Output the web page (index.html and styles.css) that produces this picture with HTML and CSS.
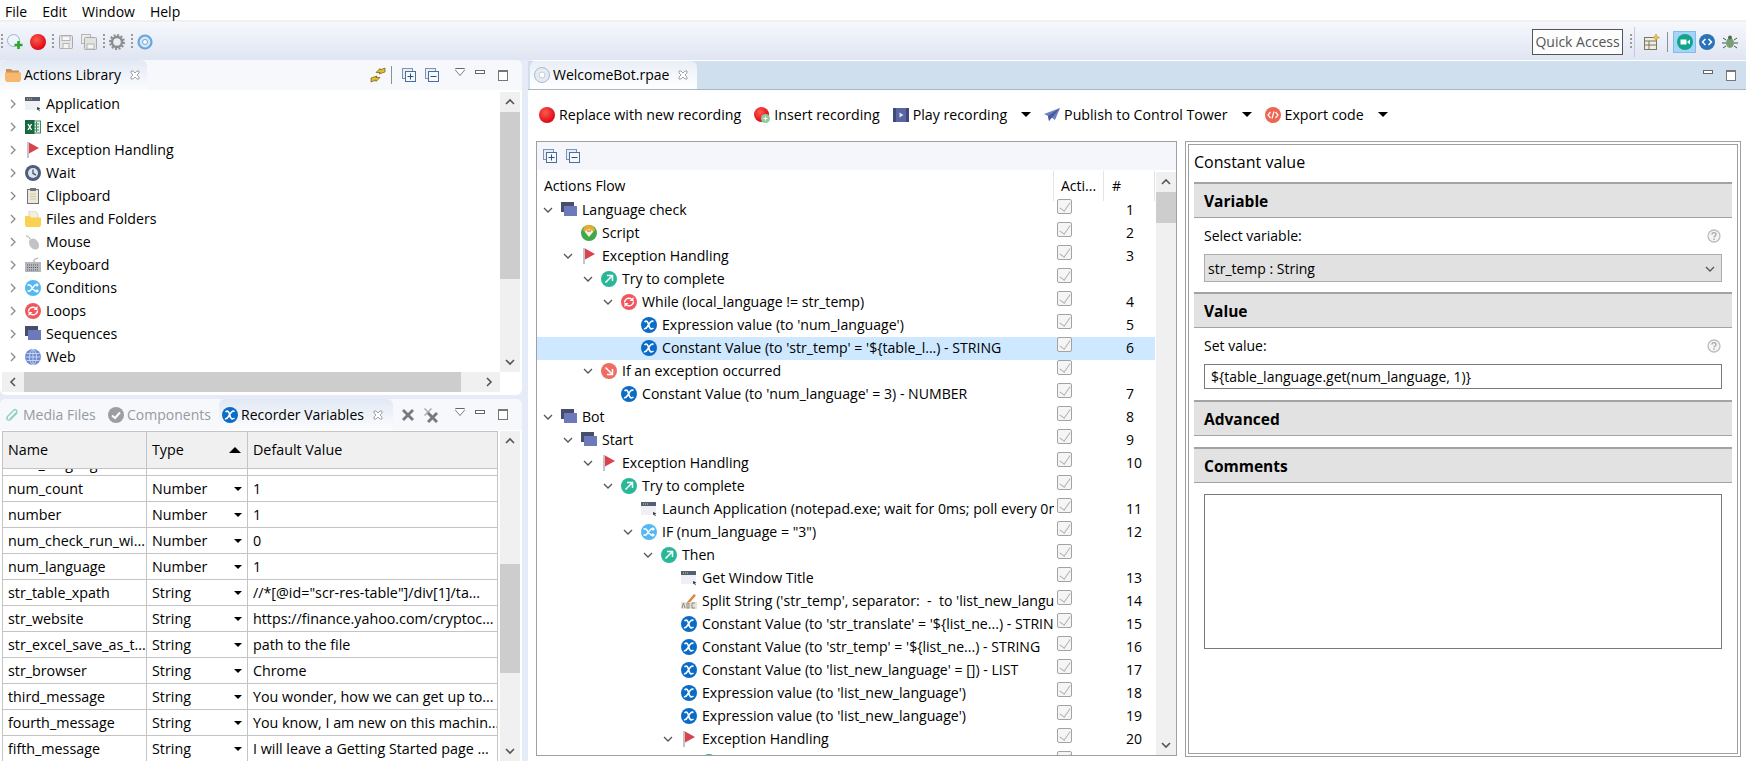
FILE: index.html
```html
<!DOCTYPE html>
<html>
<head>
<meta charset="UTF-8">
<title>WelcomeBot.rpae</title>
<link rel="stylesheet" href="styles.css">
</head>
<body>
<svg class="sprite">
	<defs>
		<radialGradient id="redball" cx="40%" cy="35%" r="70%"><stop offset="0" stop-color="#ff5a4d"/><stop offset="1" stop-color="#d80010"/></radialGradient>
	</defs>
	<symbol id="i-app" viewBox="0 0 16 16"><rect x="0" y="1" width="15" height="13" fill="#eff0f5"/><rect x="0" y="1" width="15" height="4" fill="#555f73"/><path d="M2 3h1M4 3h1M6 3h1" stroke="#e8c860"/><path d="M12 11l3.500 1.500-1.500.5.800 2-.8.300-.8-2-1 1z" fill="#333"/></symbol>
	<symbol id="i-excel" viewBox="0 0 16 16"><rect x="7" y="2" width="8.500" height="12" fill="#e6f0ea" stroke="#3f8a63"/><path d="M9 5h5M9 8h5M9 11h5M11.500 3v10" stroke="#3f8a63"/><rect x="0" y="1" width="9.500" height="14" fill="#17693f"/><path d="M3 5l3.500 6M6.500 5L3 11" stroke="#fff" stroke-width="1.400"/></symbol>
	<symbol id="i-flag" viewBox="0 0 16 16"><rect x="2" y="0" width="2" height="16" fill="#c4c4c8"/><path d="M4 .5l10 5.500-10 5.500z" fill="#d9434e"/></symbol>
	<symbol id="i-wait" viewBox="0 0 16 16"><circle cx="8" cy="8" r="8" fill="#4f5e7c"/><circle cx="8" cy="8" r="5" fill="#dfe4ee"/><path d="M8 4.500V8.500L11 10" stroke="#4f5e7c" stroke-width="1.400" fill="none"/></symbol>
	<symbol id="i-clip" viewBox="0 0 16 16"><rect x="2.500" y="1.500" width="11" height="14" fill="#eee9d6" stroke="#6d7480"/><rect x="5" y="0" width="6" height="3" fill="#6d7480"/><path d="M5 6h6M5 8.500h6M5 11h6" stroke="#cfc8aa"/></symbol>
	<symbol id="i-files" viewBox="0 0 16 16"><path d="M4 0h6l3 3v6H4z" fill="#f3efe2" stroke="#c9c1a5" stroke-width=".6"/><path d="M0 5h5l1 1.500h10V14l-1 2H1l-1-2z" fill="#f8d250"/></symbol>
	<symbol id="i-folder" viewBox="0 0 16 16"><path d="M1 2h5l1.500 1.500H14V7H1z" fill="#c9915a"/><path d="M0 5.500h16V13l-1.500 2h-13L0 13z" fill="#f6b86c"/></symbol>
	<symbol id="i-mouse" viewBox="0 0 16 16"><ellipse cx="9" cy="10" rx="4.500" ry="6" transform="rotate(-35 9 10)" fill="#c3c3c6"/><path d="M5 5C4 3 3 2 1 2" stroke="#999" fill="none"/></symbol>
	<symbol id="i-keyboard" viewBox="0 0 16 16"><rect x="0" y="5" width="16" height="10" fill="#b5b7bc"/><path d="M2 8h12M2 10.500h12M2 13h12" stroke="#55575e" stroke-dasharray="1 1"/><path d="M9 5V3c0-1 2-1 4-2" stroke="#999" fill="none"/></symbol>
	<symbol id="i-cond" viewBox="0 0 16 16"><circle cx="8" cy="8" r="8" fill="#54b8f2"/><path d="M2.500 5h2.500l5 6h3M2.500 11h2.500l5-6h3" stroke="#fff" stroke-width="1.300" fill="none"/><path d="M11.500 2.800l2.500 2.200-2.500 2.200zM11.500 8.800l2.500 2.200-2.500 2.200z" fill="#fff"/></symbol>
	<symbol id="i-loop" viewBox="0 0 16 16"><circle cx="8" cy="8" r="8" fill="#f2565c"/><path d="M3.500 8.500c0-3 3-5 6-4l1.500 1M12.500 7.500c0 3-3 5-6 4L5 10.500" stroke="#fff" stroke-width="1.500" fill="none"/><path d="M12.500 3v4h-4zM3.500 13V9h4z" fill="#fff"/></symbol>
	<symbol id="i-seq" viewBox="0 0 16 16"><rect x="0" y="0" width="13" height="10" fill="#474e6c"/><rect x="3" y="4" width="13" height="10" fill="#6c79bb"/></symbol>
	<symbol id="i-web" viewBox="0 0 16 16"><circle cx="8" cy="8" r="8" fill="#6d8bd0"/><g stroke="#d8e2f6" stroke-width=".8" fill="none"><ellipse cx="8" cy="8" rx="3.500" ry="7.500"/><path d="M8 .5v15M.5 8h15M1.500 4.500h13M1.500 11.500h13"/></g></symbol>
	<symbol id="i-x" viewBox="0 0 16 16"><circle cx="8" cy="8" r="8" fill="#0a6cc6"/><path d="M3.500 5c2-2 3.300-.5 4.200 3s2.300 5 4.800 3M12.500 4.500c-2-1.500-3.500 1-5 3.500s-2.500 4.500-4.500 3.500" stroke="#fff" stroke-width="1.600" fill="none"/></symbol>
	<symbol id="i-try" viewBox="0 0 16 16"><circle cx="8" cy="8" r="8" fill="#28b898"/><path d="M4.500 11.500L11 5M6 4.500h5.500V10" stroke="#fff" stroke-width="1.500" fill="none"/></symbol>
	<symbol id="i-catch" viewBox="0 0 16 16"><circle cx="8" cy="8" r="8" fill="#ee6c62"/><path d="M4.500 4.500L11 11M11.500 6v5.500H6" stroke="#fff" stroke-width="1.500" fill="none"/></symbol>
	<symbol id="i-script" viewBox="0 0 16 16"><circle cx="8" cy="8" r="8" fill="#3fa84a"/><path d="M2 6a6 6 0 0 1 12 0z" fill="#f3a92c"/><path d="M3.500 6.500L8 4l4.500 2.500L8 12z" fill="#fbeedc"/><path d="M6 6h4" stroke="#a06a3a"/></symbol>
	<symbol id="i-split" viewBox="0 0 16 16"><path d="M6 9l7-8 2 1.500-7 8z" fill="#d98a3c"/><rect x="0" y="9" width="16" height="7" fill="#e8e3d4"/><path d="M1 15l1.500-5 1.500 5M6 10v5h2v-5zM14 10h-3v5h3" stroke="#8a8a80" fill="none"/></symbol>
	<symbol id="i-chev-r" viewBox="0 0 10 10"><path d="M3 1l4 4-4 4" stroke="#8a8a8a" stroke-width="1.300" fill="none"/></symbol>
	<symbol id="i-chev-d" viewBox="0 0 10 10"><path d="M1 3l4 4 4-4" stroke="#555" stroke-width="1.300" fill="none"/></symbol>
	<symbol id="i-up" viewBox="0 0 12 12"><path d="M2 8l4-4 4 4" stroke="#555" stroke-width="1.600" fill="none"/></symbol>
	<symbol id="i-down" viewBox="0 0 12 12"><path d="M2 4l4 4 4-4" stroke="#555" stroke-width="1.600" fill="none"/></symbol>
	<symbol id="i-left" viewBox="0 0 12 12"><path d="M8 2L4 6l4 4" stroke="#555" stroke-width="1.600" fill="none"/></symbol>
	<symbol id="i-right" viewBox="0 0 12 12"><path d="M4 2l4 4-4 4" stroke="#555" stroke-width="1.600" fill="none"/></symbol>
	<symbol id="i-expand" viewBox="0 0 14 14"><rect x=".5" y=".5" width="10" height="10" fill="#e8eef8" stroke="#7c93b2"/><rect x="3.500" y="3.500" width="10" height="10" fill="#f5f8fd" stroke="#4e6d99"/><path d="M5.500 8.500h6M8.500 5.500v6" stroke="#2e4f80"/></symbol>
	<symbol id="i-collapse" viewBox="0 0 14 14"><rect x=".5" y=".5" width="10" height="10" fill="#e8eef8" stroke="#7c93b2"/><rect x="3.500" y="3.500" width="10" height="10" fill="#f5f8fd" stroke="#4e6d99"/><path d="M5.500 8.500h6" stroke="#2e4f80"/></symbol>
	<symbol id="i-close" viewBox="0 0 10 10"><path d="M1 1h2l2 2 2-2h2v2L7 5l2 2v2H7L5 7 3 9H1V7l2-2-2-2z" fill="#fff" stroke="#8d8d8d" stroke-width=".8"/></symbol>
	<symbol id="i-sync" viewBox="0 0 16 16"><path d="M15 1L10 3V1.500L6 5.500h4L9 7l6-2z" fill="#e6bd30" stroke="#6f5c10" stroke-width=".7"/><path d="M1 15l5-2v1.500l4-4H6L7 9l-6 2z" fill="#e6bd30" stroke="#6f5c10" stroke-width=".7"/></symbol>
	<symbol id="i-del" viewBox="0 0 16 16"><path d="M2 4l2-2 4 4 4-4 2 2-4 4 4 4-2 2-4-4-4 4-2-2 4-4z" fill="#77797e"/></symbol>
	<symbol id="i-delall" viewBox="0 0 16 16"><path d="M1 2l1-1 3 3 3-3 1 1-3 3 3 3-1 1-3-3-3 3-1-1 3-3z" fill="#a9abb0"/><path d="M4 7l2-2 3.500 3.500L13 5l2 2-3.500 3.500L15 14l-2 2-3.500-3.500L6 16l-2-2 3.500-3.500z" fill="#77797e"/></symbol>
	<symbol id="i-paper" viewBox="0 0 16 16"><path d="M13 6L6.500 12.500c-2 2-5-1-3-3L10 3c1.500-1.500 4 1 2.500 2.500L6 12" stroke="#8cd0b6" stroke-width="1.400" fill="none"/></symbol>
	<symbol id="i-comp" viewBox="0 0 16 16"><circle cx="8" cy="8" r="8" fill="#9c9ea3"/><path d="M4 8.500l3 2.500 5-5.500" stroke="#fff" stroke-width="2" fill="none"/></symbol>
	<symbol id="i-newrec" viewBox="0 0 16 16"><circle cx="6.500" cy="6.500" r="6" fill="#eef4fb" stroke="#9db4cf"/><path d="M11.500 7v8M7.500 11h8" stroke="#2ea32e" stroke-width="2.600"/></symbol>
	<symbol id="i-save" viewBox="0 0 16 16"><rect x="1.500" y="1.500" width="13" height="13" rx="1" fill="#e6e6e6" stroke="#a9a9a9"/><rect x="4" y="2" width="8" height="4.500" fill="#f7f7f7" stroke="#b5b5b5"/><rect x="5" y="9.500" width="6" height="5" fill="#f3f3f3" stroke="#b5b5b5"/></symbol>
	<symbol id="i-saveall" viewBox="0 0 16 16"><rect x=".5" y=".5" width="9" height="9" fill="#ececec" stroke="#b5b5b5"/><rect x="3.500" y="3.500" width="12" height="12" rx="1" fill="#e2e2e2" stroke="#a9a9a9"/><rect x="6" y="10" width="7" height="5" fill="#f3f3f3" stroke="#b5b5b5"/></symbol>
	<symbol id="i-gear" viewBox="0 0 16 16"><circle cx="8" cy="8" r="5" fill="none" stroke="#8c8c8c" stroke-width="2.400"/><circle cx="8" cy="8" r="7" fill="none" stroke="#8c8c8c" stroke-width="2" stroke-dasharray="2 1.660"/></symbol>
	<symbol id="i-target" viewBox="0 0 16 16"><circle cx="8" cy="8" r="6.500" fill="#d5e6f6" stroke="#6aa5dc" stroke-width="2.200"/><circle cx="8" cy="8" r="2.500" fill="#fff" stroke="#6aa5dc"/></symbol>
	<symbol id="i-disc" viewBox="0 0 16 16"><circle cx="8" cy="8" r="7.500" fill="#e6ebf3" stroke="#a9b7cf"/><circle cx="8" cy="8" r="3" fill="#fff" stroke="#c3cddd"/></symbol>
	<symbol id="i-rec" viewBox="0 0 16 16"><circle cx="8" cy="8" r="8" fill="url(#redball)"/></symbol>
	<symbol id="i-insert" viewBox="0 0 16 16"><circle cx="7.500" cy="7.500" r="7.500" fill="url(#redball)"/><circle cx="11.500" cy="11.500" r="4.500" fill="#8fcb9c"/><path d="M9.500 11.500h4M11.500 9.500v4" stroke="#fff"/></symbol>
	<symbol id="i-play" viewBox="0 0 16 16"><rect x="0" y="1" width="16" height="14" fill="#5966a3"/><path d="M0 1h3v14H0zM13 1h3v14h-3z" fill="#3f4a7c"/><path d="M6.500 5.500l4 2.500-4 2.500z" fill="#dfe3f3"/></symbol>
	<symbol id="i-publish" viewBox="0 0 16 16"><path d="M16 1L0 7l4 2 1 5 2.500-3.500L11 13z" fill="#6d80c2"/><path d="M16 1L4 9l1 5z" fill="#4a5a99"/></symbol>
	<symbol id="i-export" viewBox="0 0 16 16"><circle cx="8" cy="8" r="8" fill="#ee6552"/><path d="M5.500 5L3 8l2.500 3M10.500 5L13 8l-2.500 3M9 4.500L7 11.500" stroke="#fff" stroke-width="1.200" fill="none"/></symbol>
	<symbol id="i-persp" viewBox="0 0 16 16"><rect x=".5" y="3.500" width="12" height="12" fill="#f0ece0" stroke="#7b7667"/><path d="M.5 7h12M5 7v8.500M.5 11h12" stroke="#7b7667"/><path d="M12 0l1 2.500 2.500 1-2.500 1-1 2.500-1-2.500-2.500-1 2.500-1z" fill="#f2c744" stroke="#a8862a" stroke-width=".5"/></symbol>
	<symbol id="i-cam" viewBox="0 0 16 16"><circle cx="8" cy="8" r="8" fill="#10a58a"/><rect x="3.500" y="5.500" width="6" height="5" fill="#fff"/><path d="M10 8l3-2.500v5z" fill="#fff"/></symbol>
	<symbol id="i-code" viewBox="0 0 16 16"><circle cx="8" cy="8" r="8" fill="#2b72b8"/><path d="M6.500 5L3.500 8l3 3M9.500 5l3 3-3 3" stroke="#fff" stroke-width="1.500" fill="none"/></symbol>
	<symbol id="i-bug" viewBox="0 0 16 16"><ellipse cx="8" cy="9" rx="4" ry="5" fill="#7d9c74"/><circle cx="8" cy="3.500" r="2" fill="#4f6d52"/><path d="M4 6L1 4M4 9H0M4 12l-3 2M12 6l3-2M12 9h4M12 12l3 2" stroke="#3f5a44"/></symbol>
	<symbol id="i-help" viewBox="0 0 14 14"><circle cx="7" cy="7" r="6" fill="#f4f4f4" stroke="#bdbdbd" stroke-width="1.300"/><path d="M5 5.500c0-2.500 4-2.500 4 0 0 1.500-2 1.500-2 3M7 9.500v1.500" stroke="#a5a5a5" stroke-width="1.300" fill="none"/></symbol>
</svg>

<div class="menubar">
	<span>File</span><span>Edit</span><span>Window</span><span>Help</span>
</div>

<div class="toolbar">
	<i class="grip"></i>
	<svg class="ico tool"><use href="#i-newrec"/></svg>
	<svg class="ico tool"><use href="#i-rec"/></svg>
	<i class="grip"></i>
	<svg class="ico tool"><use href="#i-save"/></svg>
	<svg class="ico tool"><use href="#i-saveall"/></svg>
	<i class="grip"></i>
	<svg class="ico tool"><use href="#i-gear"/></svg>
	<i class="grip"></i>
	<svg class="ico tool"><use href="#i-target"/></svg>
	<div class="toolbar-right">
		<div class="quick">Quick Access</div>
		<i class="grip"></i>
		<i class="tool-sep"></i>
		<svg class="ico persp"><use href="#i-persp"/></svg>
		<i class="thin-sep"></i>
		<span class="persp-on"><svg class="ico"><use href="#i-cam"/></svg></span>
		<svg class="ico persp-code"><use href="#i-code"/></svg>
		<svg class="ico persp-bug"><use href="#i-bug"/></svg>
	</div>
</div>

<div class="workbench">
	<div class="left">
		<section class="view view-lib">
			<div class="tabbar">
				<div class="tab tab-lib">
					<svg class="ico"><use href="#i-folder"/></svg>
					<span>Actions Library</span>
					<svg class="close"><use href="#i-close"/></svg>
				</div>
				<div class="view-tools">
					<svg class="ico"><use href="#i-sync"/></svg>
					<i class="thin-sep tall"></i>
					<svg class="ico14 first"><use href="#i-expand"/></svg>
					<svg class="ico14"><use href="#i-collapse"/></svg>
					<i class="view-menu"></i><i class="view-min"></i><i class="view-max"></i>
				</div>
			</div>
			<div class="lib-body">
				<div class="lib-tree">
					<div class="lib-row"><svg class="chev"><use href="#i-chev-r"/></svg><svg class="ico"><use href="#i-app"/></svg>Application</div>
					<div class="lib-row"><svg class="chev"><use href="#i-chev-r"/></svg><svg class="ico"><use href="#i-excel"/></svg>Excel</div>
					<div class="lib-row"><svg class="chev"><use href="#i-chev-r"/></svg><svg class="ico"><use href="#i-flag"/></svg>Exception Handling</div>
					<div class="lib-row"><svg class="chev"><use href="#i-chev-r"/></svg><svg class="ico"><use href="#i-wait"/></svg>Wait</div>
					<div class="lib-row"><svg class="chev"><use href="#i-chev-r"/></svg><svg class="ico"><use href="#i-clip"/></svg>Clipboard</div>
					<div class="lib-row"><svg class="chev"><use href="#i-chev-r"/></svg><svg class="ico"><use href="#i-files"/></svg>Files and Folders</div>
					<div class="lib-row"><svg class="chev"><use href="#i-chev-r"/></svg><svg class="ico"><use href="#i-mouse"/></svg>Mouse</div>
					<div class="lib-row"><svg class="chev"><use href="#i-chev-r"/></svg><svg class="ico"><use href="#i-keyboard"/></svg>Keyboard</div>
					<div class="lib-row"><svg class="chev"><use href="#i-chev-r"/></svg><svg class="ico"><use href="#i-cond"/></svg>Conditions</div>
					<div class="lib-row"><svg class="chev"><use href="#i-chev-r"/></svg><svg class="ico"><use href="#i-loop"/></svg>Loops</div>
					<div class="lib-row"><svg class="chev"><use href="#i-chev-r"/></svg><svg class="ico"><use href="#i-seq"/></svg>Sequences</div>
					<div class="lib-row"><svg class="chev"><use href="#i-chev-r"/></svg><svg class="ico"><use href="#i-web"/></svg>Web</div>
				</div>
				<div class="vscroll">
					<svg class="arrow"><use href="#i-up"/></svg>
					<div class="thumb thumb-lib"></div>
					<svg class="arrow end"><use href="#i-down"/></svg>
				</div>
			</div>
			<div class="hscroll">
				<svg class="arrow"><use href="#i-left"/></svg>
				<div class="hthumb"></div>
				<svg class="arrow end"><use href="#i-right"/></svg>
			</div>
		</section>

		<section class="view view-vars">
			<div class="tabbar tabbar-vars">
				<div class="tab-off"><svg class="ico"><use href="#i-paper"/></svg>Media Files</div>
				<div class="tab-off"><svg class="ico"><use href="#i-comp"/></svg>Components</div>
				<div class="tab tab-vars">
					<svg class="ico"><use href="#i-x"/></svg>
					<span>Recorder Variables</span>
					<svg class="close"><use href="#i-close"/></svg>
				</div>
				<div class="view-tools">
					<svg class="ico"><use href="#i-del"/></svg>
					<svg class="ico second"><use href="#i-delall"/></svg>
					<i class="view-menu"></i><i class="view-min"></i><i class="view-max"></i>
				</div>
			</div>
			<div class="vars-body">
				<table class="vars">
					<colgroup><col class="c-name"><col class="c-type"><col class="c-val"></colgroup>
					<tr class="head"><th>Name</th><th>Type<i class="sort"></i></th><th>Default Value</th></tr>
					<tr class="partial">
						<td><div><span>local_language</span></div></td><td></td><td><div><span>..</span></div></td>
					</tr>
					<tr><td>num_count</td><td>Number<i class="caret"></i></td><td>1</td></tr>
					<tr><td>number</td><td>Number<i class="caret"></i></td><td>1</td></tr>
					<tr><td>num_check_run_wi...</td><td>Number<i class="caret"></i></td><td>0</td></tr>
					<tr><td>num_language</td><td>Number<i class="caret"></i></td><td>1</td></tr>
					<tr><td>str_table_xpath</td><td>String<i class="caret"></i></td><td>//*[@id="scr-res-table"]/div[1]/ta...</td></tr>
					<tr><td>str_website</td><td>String<i class="caret"></i></td><td>https://finance.yahoo.com/cryptoc...</td></tr>
					<tr><td>str_excel_save_as_t...</td><td>String<i class="caret"></i></td><td>path to the file</td></tr>
					<tr><td>str_browser</td><td>String<i class="caret"></i></td><td>Chrome</td></tr>
					<tr><td>third_message</td><td>String<i class="caret"></i></td><td>You wonder, how we can get up to...</td></tr>
					<tr><td>fourth_message</td><td>String<i class="caret"></i></td><td>You know, I am new on this machin...</td></tr>
					<tr><td>fifth_message</td><td>String<i class="caret"></i></td><td>I will leave a Getting Started page ...</td></tr>
				</table>
				<div class="vscroll">
					<svg class="arrow"><use href="#i-up"/></svg>
					<div class="thumb thumb-vars"></div>
					<svg class="arrow end"><use href="#i-down"/></svg>
				</div>
			</div>
		</section>
	</div>

	<section class="editor">
		<div class="editor-tabs">
			<div class="tab-editor">
				<svg class="ico"><use href="#i-disc"/></svg>
				<span>WelcomeBot.rpae</span>
				<svg class="close"><use href="#i-close"/></svg>
			</div>
			<div class="view-tools editor-tools"><i class="view-min"></i><i class="view-max"></i></div>
		</div>
		<div class="editor-actions">
			<span class="action"><svg class="ico"><use href="#i-rec"/></svg>Replace with new recording</span>
			<span class="action"><svg class="ico"><use href="#i-insert"/></svg>Insert recording</span>
			<span class="action"><svg class="ico"><use href="#i-play"/></svg>Play recording<i class="caret big"></i></span>
			<span class="action"><svg class="ico"><use href="#i-publish"/></svg>Publish to Control Tower<i class="caret big"></i></span>
			<span class="action"><svg class="ico"><use href="#i-export"/></svg>Export code<i class="caret big"></i></span>
		</div>
		<div class="editor-main">
			<div class="flow">
				<div class="flow-bar">
					<svg class="ico14"><use href="#i-expand"/></svg>
					<svg class="ico14"><use href="#i-collapse"/></svg>
				</div>
				<div class="flow-body">
					<div class="flow-main">
						<div class="flow-head"><div>Actions Flow</div><div>Acti...</div><div>#</div></div>
						<div class="flow-rows">
							<div class="frow"><div class="fname lv0"><svg class="chev"><use href="#i-chev-d"/></svg><svg class="ico"><use href="#i-seq"/></svg>Language check</div><i class="check"></i><div class="fnum">1</div></div>
							<div class="frow"><div class="fname lv1"><i class="chev"></i><svg class="ico"><use href="#i-script"/></svg>Script</div><i class="check"></i><div class="fnum">2</div></div>
							<div class="frow"><div class="fname lv1"><svg class="chev"><use href="#i-chev-d"/></svg><svg class="ico"><use href="#i-flag"/></svg>Exception Handling</div><i class="check"></i><div class="fnum">3</div></div>
							<div class="frow"><div class="fname lv2"><svg class="chev"><use href="#i-chev-d"/></svg><svg class="ico"><use href="#i-try"/></svg>Try to complete</div><i class="check"></i><div class="fnum"></div></div>
							<div class="frow"><div class="fname lv3"><svg class="chev"><use href="#i-chev-d"/></svg><svg class="ico"><use href="#i-loop"/></svg>While (local_language != str_temp)</div><i class="check"></i><div class="fnum">4</div></div>
							<div class="frow"><div class="fname lv4"><i class="chev"></i><svg class="ico"><use href="#i-x"/></svg>Expression value (to 'num_language')</div><i class="check"></i><div class="fnum">5</div></div>
							<div class="frow selected"><div class="fname lv4"><i class="chev"></i><svg class="ico"><use href="#i-x"/></svg>Constant Value (to 'str_temp' = '${table_l...) - STRING</div><i class="check"></i><div class="fnum">6</div></div>
							<div class="frow"><div class="fname lv2"><svg class="chev"><use href="#i-chev-d"/></svg><svg class="ico"><use href="#i-catch"/></svg>If an exception occurred</div><i class="check"></i><div class="fnum"></div></div>
							<div class="frow"><div class="fname lv3"><i class="chev"></i><svg class="ico"><use href="#i-x"/></svg>Constant Value (to 'num_language' = 3) - NUMBER</div><i class="check"></i><div class="fnum">7</div></div>
							<div class="frow"><div class="fname lv0"><svg class="chev"><use href="#i-chev-d"/></svg><svg class="ico"><use href="#i-seq"/></svg>Bot</div><i class="check"></i><div class="fnum">8</div></div>
							<div class="frow"><div class="fname lv1"><svg class="chev"><use href="#i-chev-d"/></svg><svg class="ico"><use href="#i-seq"/></svg>Start</div><i class="check"></i><div class="fnum">9</div></div>
							<div class="frow"><div class="fname lv2"><svg class="chev"><use href="#i-chev-d"/></svg><svg class="ico"><use href="#i-flag"/></svg>Exception Handling</div><i class="check"></i><div class="fnum">10</div></div>
							<div class="frow"><div class="fname lv3"><svg class="chev"><use href="#i-chev-d"/></svg><svg class="ico"><use href="#i-try"/></svg>Try to complete</div><i class="check"></i><div class="fnum"></div></div>
							<div class="frow"><div class="fname lv4"><i class="chev"></i><svg class="ico"><use href="#i-app"/></svg>Launch Application (notepad.exe; wait for 0ms; poll every 0ms)</div><i class="check"></i><div class="fnum">11</div></div>
							<div class="frow"><div class="fname lv4"><svg class="chev"><use href="#i-chev-d"/></svg><svg class="ico"><use href="#i-cond"/></svg>IF (num_language = "3")</div><i class="check"></i><div class="fnum">12</div></div>
							<div class="frow"><div class="fname lv5"><svg class="chev"><use href="#i-chev-d"/></svg><svg class="ico"><use href="#i-try"/></svg>Then</div><i class="check"></i><div class="fnum"></div></div>
							<div class="frow"><div class="fname lv6"><i class="chev"></i><svg class="ico"><use href="#i-app"/></svg>Get Window Title</div><i class="check"></i><div class="fnum">13</div></div>
							<div class="frow"><div class="fname lv6"><i class="chev"></i><svg class="ico"><use href="#i-split"/></svg>Split String ('str_temp', separator: &nbsp;- &nbsp;to 'list_new_language')</div><i class="check"></i><div class="fnum">14</div></div>
							<div class="frow"><div class="fname lv6"><i class="chev"></i><svg class="ico"><use href="#i-x"/></svg>Constant Value (to 'str_translate' = '${list_ne...) - STRING</div><i class="check"></i><div class="fnum">15</div></div>
							<div class="frow"><div class="fname lv6"><i class="chev"></i><svg class="ico"><use href="#i-x"/></svg>Constant Value (to 'str_temp' = '${list_ne...) - STRING</div><i class="check"></i><div class="fnum">16</div></div>
							<div class="frow"><div class="fname lv6"><i class="chev"></i><svg class="ico"><use href="#i-x"/></svg>Constant Value (to 'list_new_language' = []) - LIST</div><i class="check"></i><div class="fnum">17</div></div>
							<div class="frow"><div class="fname lv6"><i class="chev"></i><svg class="ico"><use href="#i-x"/></svg>Expression value (to 'list_new_language')</div><i class="check"></i><div class="fnum">18</div></div>
							<div class="frow"><div class="fname lv6"><i class="chev"></i><svg class="ico"><use href="#i-x"/></svg>Expression value (to 'list_new_language')</div><i class="check"></i><div class="fnum">19</div></div>
							<div class="frow"><div class="fname lv6"><svg class="chev"><use href="#i-chev-d"/></svg><svg class="ico"><use href="#i-flag"/></svg>Exception Handling</div><i class="check"></i><div class="fnum">20</div></div>
							<div class="frow"><div class="fname lv7"><i class="chev"></i><svg class="ico"><use href="#i-try"/></svg></div><i class="check"></i><div class="fnum"></div></div>
						</div>
					</div>
					<div class="vscroll flow-scroll">
						<svg class="arrow"><use href="#i-up"/></svg>
						<div class="thumb thumb-flow"></div>
						<svg class="arrow end"><use href="#i-down"/></svg>
					</div>
				</div>
			</div>

			<div class="props">
				<div class="props-inner">
					<div class="props-title">Constant value</div>
					<div class="sec-head">Variable</div>
					<div class="field-label">Select variable:<svg class="ico14"><use href="#i-help"/></svg></div>
					<div class="combo">str_temp : String<svg class="chev"><use href="#i-chev-d"/></svg></div>
					<div class="sec-head">Value</div>
					<div class="field-label">Set value:<svg class="ico14"><use href="#i-help"/></svg></div>
					<div class="textbox">${table_language.get(num_language, 1)}</div>
					<div class="sec-head">Advanced</div>
					<div class="sec-head gap">Comments</div>
					<div class="comments"></div>
				</div>
			</div>
		</div>
	</section>
</div>
</body>
</html>
```

FILE: styles.css
```css
* {
	box-sizing: border-box;
}
html, body {
	margin: 0;
	height: 761px;
	overflow: hidden;
}
body {
	background: #fff;
	color: #000;
	font: 14px/20px "Open Sans", "Noto Sans", sans-serif;
}
i {
	display: block;
	font-style: normal;
}
.sprite {
	position: absolute;
	width: 0;
	height: 0;
}
.ico {
	width: 16px;
	height: 16px;
	flex: none;
}
.ico14 {
	width: 14px;
	height: 14px;
	flex: none;
}

/* menu + main toolbar */
.menubar {
	display: flex;
	height: 22px;
	padding: 2px 0 0 5px;
	gap: 15px;
	background: #fff;
	border-bottom: 2px solid #f0f0f0;
}
.toolbar {
	display: flex;
	align-items: center;
	height: 38px;
	padding-top: 2px;
	background: linear-gradient(#f6f8fc, #dfe5f2);
}
.grip {
	width: 2px;
	height: 16px;
	margin: 0 4px 0 -1px;
	flex: none;
	background: repeating-linear-gradient(#9a9a9a 0 2px, transparent 2px 4px);
}
.toolbar > .grip:first-child {
	margin-left: 1px;
}
.tool {
	margin-right: 7px;
}
.toolbar-right {
	display: flex;
	align-items: center;
	margin-left: auto;
	height: 100%;
}
.toolbar-right .grip {
	margin: 0 2px 0 1px;
}
.quick {
	width: 91px;
	height: 26px;
	margin-right: 6px;
	border: 1px solid #555;
	background: #fdfdfe;
	color: #555;
	line-height: 24px;
	text-align: center;
	white-space: nowrap;
}
.tool-sep {
	width: 1px;
	height: 30px;
	margin: 0 9px 0 0;
	background: #c6cbd6;
}
.thin-sep {
	width: 1px;
	height: 20px;
	background: #8a8f99;
	margin: 0 5px 0 7px;
}
.thin-sep.tall {
	height: 18px;
	margin: 0 10px 0 5px;
}
.persp-on {
	display: flex;
	align-items: center;
	justify-content: center;
	width: 23px;
	height: 22px;
	background: #a6d4f7;
	border: 1px solid #7fbcec;
}
.persp-code {
	margin-left: 3px;
}
.persp-bug {
	margin: 0 8px 0 7px;
}

/* workbench */
.workbench {
	display: flex;
	height: 701px;
	background: #e6ebf8;
}
.left {
	display: flex;
	flex-direction: column;
	width: 522px;
	flex: none;
}
.view {
	background: #fff;
	border-radius: 6px 6px 0 0;
}
.view-lib {
	height: 335px;
	margin-bottom: 4px;
	border-radius: 6px;
}
.view-vars {
	height: 362px;
}
.tabbar {
	display: flex;
	height: 30px;
	background: #f6f8fc;
	border-radius: 6px 6px 0 0;
}
.tabbar-vars {
	height: 31px;
}
.tab {
	display: flex;
	align-items: center;
	gap: 3px;
	background: linear-gradient(#e2e9f4, #fbfcfe);
	border-radius: 6px 6px 0 0;
	white-space: nowrap;
}
.tab-lib {
	width: 147px;
	padding-left: 5px;
}
.tab-vars {
	width: 174px;
	padding-left: 3px;
	margin-left: 4px;
}
.close {
	width: 10px;
	height: 10px;
	margin-left: 6px;
	flex: none;
}
.tab-off {
	display: flex;
	align-items: center;
	gap: 3px;
	padding-left: 4px;
	width: 104px;
	color: #98999c;
	white-space: nowrap;
}
.tab-off + .tab-off {
	width: 111px;
}
.view-tools {
	display: flex;
	align-items: center;
	margin-left: auto;
	padding-right: 14px;
}
.view-tools .first {
	margin-right: 9px;
}
.view-tools .second {
	margin: 0 16px 0 7px;
}
.view-menu {
	width: 0;
	height: 0;
	margin: 0 0 6px 16px;
	border: 5px solid transparent;
	border-top: 6px solid #fff;
	border-bottom: 0;
	filter: drop-shadow(0 -1px 0 #666) drop-shadow(0 1px 0 #666);
}
.view-vars .view-menu {
	margin-left: 0;
}
.view-min {
	width: 10px;
	height: 4px;
	margin: 0 0 6px 10px;
	border: 1px solid #666;
	background: #fff;
}
.view-max {
	width: 10px;
	height: 11px;
	margin-left: 13px;
	border: 1px solid #777;
	border-top-width: 2px;
	background: #fff;
}

/* scrollbars */
.vscroll {
	display: flex;
	flex-direction: column;
	align-items: center;
	width: 20px;
	flex: none;
	background: #f0f0f0;
}
.arrow {
	width: 12px;
	height: 12px;
	flex: none;
	margin: 4px;
}
.vscroll .arrow.end {
	margin-top: auto;
}
.thumb {
	width: 100%;
	background: #cdcdcd;
	flex: none;
}
.thumb-lib {
	height: 167px;
}
.thumb-vars {
	height: 109px;
	margin-top: 113px;
}
.thumb-flow {
	height: 31px;
}
.hscroll {
	display: flex;
	align-items: center;
	width: 498px;
	height: 20px;
	margin-left: 2px;
	background: #f0f0f0;
}
.hthumb {
	width: 437px;
	height: 100%;
}
.hscroll .hthumb {
	background: #cdcdcd;
}
.hscroll .arrow.end {
	margin-left: auto;
}
.hscroll .arrow {
	margin: 0 5px;
}

/* actions library */
.lib-body {
	display: flex;
	height: 282px;
}
.lib-tree {
	width: 500px;
	padding-top: 2px;
	overflow: hidden;
	font-size: 14.2px;
}
.lib-row {
	display: flex;
	align-items: center;
	height: 23px;
	white-space: nowrap;
}
.lib-row .chev {
	margin: 0 7px 0 8px;
}
.lib-row .ico {
	margin-right: 5px;
}
.chev {
	display: block;
	width: 10px;
	height: 10px;
	flex: none;
}
.lib-body .vscroll {
	margin-top: 2px;
}

/* recorder variables */
.vars-body {
	display: flex;
	align-items: flex-start;
	padding-top: 1px;
}
.vars {
	width: 496px;
	margin: 0 2px;
	table-layout: fixed;
	border-collapse: collapse;
	flex: none;
	font-size: 14.3px;
}
.c-name {
	width: 144px;
}
.c-type {
	width: 101px;
}
.vars th, .vars td {
	height: 26px;
	padding: 0 5px;
	border: 1px solid #c4c4c4;
	font-weight: normal;
	text-align: left;
	white-space: nowrap;
	overflow: hidden;
}
.vars th:last-child, .vars td:last-child {
	padding-right: 0;
}
.vars .head th {
	height: 37px;
	background: #f0f0f0;
}
.vars .partial td {
	height: 7px;
}
.partial div {
	height: 6px;
	overflow: hidden;
}
.partial span {
	display: block;
	margin-top: -15px;
}
.sort {
	float: right;
	width: 0;
	height: 0;
	margin: 7px 1px 0 0;
	border: 6px solid transparent;
	border-bottom: 6px solid #000;
	border-top: 0;
}
.caret {
	float: right;
	width: 0;
	height: 0;
	margin: 8px 0 0 0;
	border: 4px solid transparent;
	border-top: 4px solid #000;
	border-bottom: 0;
}
.vars-body .vscroll {
	height: 330px;
}

/* editor */
.editor {
	flex: 1;
	margin-left: 6px;
	background: #fff;
	border-radius: 6px 0 0 0;
}
.editor-tabs {
	display: flex;
	height: 29px;
	margin-top: 1px;
	background: #cfdfee;
	border-bottom: 1px solid #a9b6c6;
}
.tab-editor {
	display: flex;
	align-items: center;
	gap: 3px;
	width: 167px;
	margin-left: 2px;
	padding-left: 4px;
	background: linear-gradient(#e9eef6, #fff);
	border-radius: 6px 6px 0 0;
	white-space: nowrap;
}
.editor-tools {
	padding-right: 10px;
}
.editor-actions {
	display: flex;
	align-items: center;
	height: 51px;
	padding: 0 0 2px 11px;
	white-space: nowrap;
	font-size: 14.2px;
}
.action {
	display: flex;
	align-items: center;
	gap: 4px;
	margin-right: 13px;
}
.caret.big {
	float: none;
	margin: 0 0 0 10px;
	border-width: 5px;
	border-top-width: 5px;
	border-bottom: 0;
}
.editor-main {
	display: flex;
	padding-left: 8px;
}

/* actions flow */
.flow {
	width: 641px;
	height: 615px;
	border: 1px solid #a0a0a0;
	overflow: hidden;
}
.flow-bar {
	display: flex;
	align-items: center;
	gap: 9px;
	height: 28px;
	padding-left: 6px;
	background: #f5f6fb;
}
.flow-body {
	display: flex;
}
.flow-main {
	width: 618px;
	padding-top: 1px;
}
.flow-head {
	display: grid;
	grid-template-columns: 517px 50px 51px;
	height: 28px;
}
.flow-head div {
	padding-left: 7px;
	line-height: 30px;
	border-right: 1px solid #e4e4e4;
}
.flow-head div:last-child {
	padding-left: 8px;
}
.flow-rows {
	height: 557px;
	overflow: hidden;
}
.frow {
	display: grid;
	grid-template-columns: 517px 50px 51px;
	height: 23px;
}
.frow.selected {
	background: #cde8ff;
}
.fname {
	display: flex;
	align-items: center;
	gap: 8px;
	padding-bottom: 2px;
	overflow: hidden;
	white-space: nowrap;
	font-size: 14.1px;
}
.fname .ico {
	margin-right: -3px;
}
.lv0 { padding-left: 6px; }
.lv1 { padding-left: 26px; }
.lv2 { padding-left: 46px; }
.lv3 { padding-left: 66px; }
.lv4 { padding-left: 86px; }
.lv5 { padding-left: 106px; }
.lv6 { padding-left: 126px; }
.lv7 { padding-left: 146px; }
.check {
	position: relative;
	width: 15px;
	height: 15px;
	margin-left: 3px;
	border: 1.500px solid #a3a3a3;
	border-radius: 2px;
	background: #f5f5f5;
}
.check::after {
	content: "";
	position: absolute;
	left: 4px;
	top: 0;
	width: 5px;
	height: 10px;
	border: solid #b0b0b0;
	border-width: 0 1px 1px 0;
	transform: rotate(35deg);
}
.fnum {
	padding-left: 22px;
	line-height: 21px;
}
.flow-scroll {
	margin: 2px 0 0 1px;
	height: 583px;
}

/* properties */
.props {
	width: 556px;
	height: 616px;
	margin-left: 8px;
	padding: 2px;
	border: 1px solid #a0a0a0;
}
.props-inner {
	height: 100%;
	padding: 0 5px;
	border: 1px solid #a0a0a0;
}
.props-title {
	height: 37px;
	padding-top: 5px;
	font-size: 16px;
	line-height: 25px;
}
.sec-head {
	height: 36px;
	padding-left: 10px;
	border-top: 2px solid #a3a3a3;
	border-bottom: 1px solid #a3a3a3;
	background: #e2e2e2;
	font-size: 15.5px;
	font-weight: bold;
	line-height: 35px;
}
.sec-head.gap {
	margin-top: 11px;
}
.field-label {
	display: flex;
	align-items: center;
	justify-content: space-between;
	height: 36px;
	padding: 0 11px 0 10px;
}
.combo, .textbox, .comments {
	width: 518px;
	margin-left: 10px;
}
.combo {
	display: flex;
	align-items: center;
	justify-content: space-between;
	height: 28px;
	margin-bottom: 10px;
	padding: 1px 6px 0 3px;
	border: 1px solid #adadad;
	background: #e1e1e1;
}
.textbox {
	height: 25px;
	margin-bottom: 11px;
	padding-left: 6px;
	border: 1px solid #7a7a7a;
	line-height: 23px;
}
.comments {
	height: 155px;
	margin-top: 11px;
	border: 1px solid #7a7a7a;
}
```
